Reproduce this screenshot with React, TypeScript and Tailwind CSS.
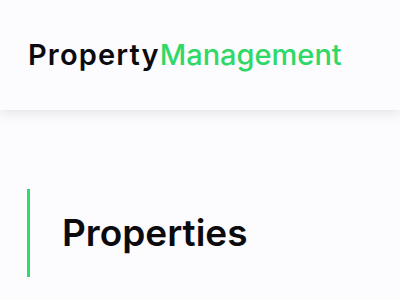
export default function App() {
  return (
    <div className="min-h-screen bg-[#fcfbfd]" style={{ fontFamily: 'Inter, "Noto Sans", sans-serif' }}>
      <header className="h-[110px] flex items-center px-7 bg-[#fcfbfd] shadow-[0_3px_12px_rgba(0,0,0,0.1)]">
        <h1 className="text-[29px] text-[#0b0b0f]">
          <span className="font-semibold tracking-[0.04em]">Property</span>
          <span className="font-medium text-[#2fd867]">Management</span>
        </h1>
      </header>

      <main className="px-[27px] pt-[79px]">
        <div className="border-l-[3px] border-[#2fdc6a] pl-8 py-[21px]">
          <h2 className="text-[37px] leading-[46px] font-semibold text-[#0b0b0f]">Properties</h2>
        </div>
      </main>
    </div>
  );
}
